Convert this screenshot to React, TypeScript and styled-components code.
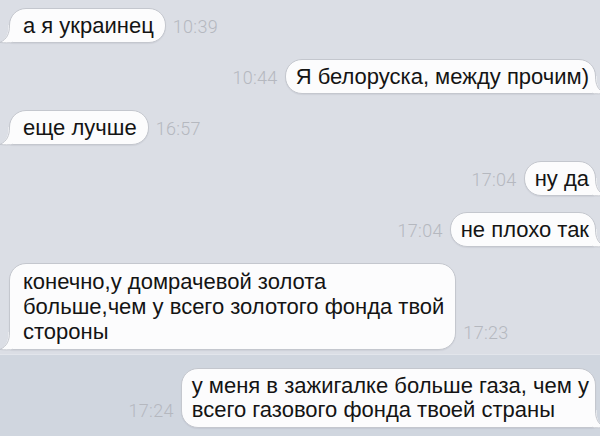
import React from "react";
import styled, { createGlobalStyle } from "styled-components";

const Global = createGlobalStyle`
  html, body { margin: 0; padding: 0; }
  body {
    width: 600px;
    height: 436px;
    overflow: hidden;
    background: #dbdee5;
    font-family: "Liberation Sans", Arial, sans-serif;
    -webkit-font-smoothing: antialiased;
  }
`;

const Thread = styled.div`
  display: flex;
  flex-direction: column;
  width: 600px;
  height: 436px;
  background: #dbdee5;
`;

const Row = styled.div<{ $side: "in" | "out"; $highlight?: boolean }>`
  display: flex;
  justify-content: ${(p) => (p.$side === "in" ? "flex-start" : "flex-end")};
  align-items: last baseline;
  gap: 7px;
  padding: ${(p) => (p.$highlight ? "11px" : "8px")} 4px 8px 9px;
  margin-top: ${(p) => (p.$highlight ? "-4px" : "0")};
  background: ${(p) => (p.$highlight ? "#d0d6df" : "transparent")};
  border-top: ${(p) => (p.$highlight ? "1px solid #e2e5eb" : "none")};
  flex: ${(p) => (p.$highlight ? "1" : "none")};
`;

const Bubble = styled.div<{ $side: "in" | "out"; $lh?: number }>`
  position: relative;
  background: #fcfcfd;
  border: 1px solid #c4c7ce;
  border-radius: ${(p) => (p.$side === "in" ? "17px 17px 17px 4px" : "17px 17px 4px 17px")};
  box-shadow: 0 1px 1px rgba(60, 70, 90, 0.08);
  padding: ${(p) => (p.$side === "in" ? "5px 11px 5px 13px" : "5px 6px 5px 10px")};
  font-size: 22px;
  line-height: ${(p) => p.$lh ?? 23}px;
  color: #141414;
  white-space: pre-line;
`;

const TailSvg = styled.svg<{ $side: "in" | "out" }>`
  position: absolute;
  bottom: -1px;
  ${(p) => (p.$side === "in" ? "left: -11px;" : "right: -11px; transform: scaleX(-1);")}
  width: 24px;
  height: 18px;
  overflow: visible;
`;

const Time = styled.span`
  font-family: Roboto, "Liberation Sans", sans-serif;
  font-weight: 300;
  font-size: 18px;
  letter-spacing: 0.3px;
  color: #b5b8bf;
  white-space: nowrap;
`;

function Tail({ side }: { side: "in" | "out" }) {
  return (
    <TailSvg $side={side} viewBox="0 0 24 18">
      <path d="M9.5 0 H13 V17 H17 V18 H10 C6 18 3 17.9 1 17.5 C7.5 14 9.5 9 9.5 0 Z" fill="#fcfcfd" />
      <path
        d="M10.5 0 C10.5 9 8 14 1 17.5 C5 18 10 17.9 15 17.5 H19"
        fill="none"
        stroke="#c4c7ce"
        strokeWidth="1"
      />
    </TailSvg>
  );
}

type Msg = { side: "in" | "out"; text: string; time: string; lh?: number; highlight?: boolean };

const messages: Msg[] = [
  { side: "in", text: "а я украинец", time: "10:39" },
  { side: "out", text: "Я белоруска, между прочим)", time: "10:44" },
  { side: "in", text: "еще лучше", time: "16:57" },
  { side: "out", text: "ну да", time: "17:04" },
  { side: "out", text: "не плохо так", time: "17:04" },
  {
    side: "in",
    text: "конечно,у домрачевой золота\nбольше,чем у всего золотого фонда твой\nстороны",
    time: "17:23",
    lh: 25,
  },
  {
    side: "out",
    text: "у меня в зажигалке больше газа, чем у\nвсего газового фонда твоей страны",
    time: "17:24",
    lh: 24,
    highlight: true,
  },
];

export default function App() {
  return (
    <>
      <Global />
      <Thread>
        {messages.map((m, i) => (
          <Row key={i} $side={m.side} $highlight={m.highlight}>
            {m.side === "out" && <Time>{m.time}</Time>}
            <Bubble $side={m.side} $lh={m.lh}>
              {m.text}
              <Tail side={m.side} />
            </Bubble>
            {m.side === "in" && <Time>{m.time}</Time>}
          </Row>
        ))}
      </Thread>
    </>
  );
}
